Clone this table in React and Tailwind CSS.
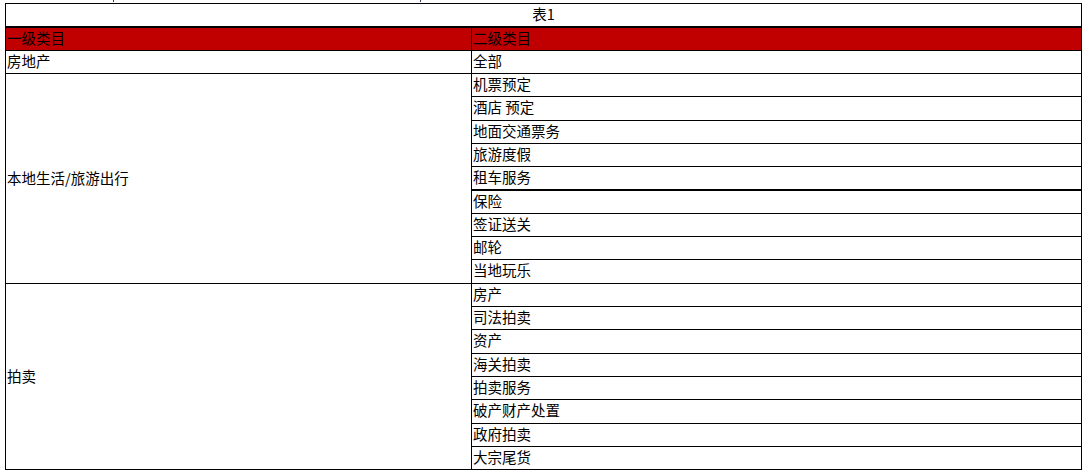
const font = { fontFamily: '"Microsoft YaHei", "Noto Sans CJK SC", "Noto Sans", sans-serif' };

// 二级类目 rows: [label, height, thick bottom border]
const TRAVEL = [
  ["机票预定", 23],
  ["酒店 预定", 24],
  ["地面交通票务", 23],
  ["旅游度假", 23],
  ["租车服务", 24, true],
  ["保险", 23],
  ["签证送关", 23],
  ["邮轮", 23],
  ["当地玩乐", 24],
];

const AUCTION = [
  ["房产", 23],
  ["司法拍卖", 23],
  ["资产", 24],
  ["海关拍卖", 23],
  ["拍卖服务", 23],
  ["破产财产处置", 24],
  ["政府拍卖", 23],
];

const heights = { 22: "h-[22px]", 23: "h-[23px]", 24: "h-[24px]" };

const Cell = ({ label, h, thick, last }) => (
  <div
    className={[
      "flex items-center pl-[1px] pb-[2px] leading-none",
      heights[h],
      last ? "" : thick ? "border-b-2 border-black" : "border-b border-black",
    ].join(" ")}
  >
    {label}
  </div>
);

const App = () => {
  return (
    <div className="w-[1086px] h-[472px] bg-white text-black text-[14.5px]" style={font}>
      {/* cut-off marks from content above */}
      <div className="h-[3px] flex">
        <div className="ml-[113px] w-px h-[2px] bg-[#3a3a5a]" />
        <div className="ml-[306px] w-px h-[2px] bg-[#3a3a5a]" />
      </div>

      <div className="ml-[5px] w-[1077px] border border-black">
        {/* title */}
        <div className="h-[24px] border-b-2 border-black flex items-center justify-center pb-[2px] leading-none">
          表1
        </div>

        {/* header */}
        <div className="h-[23px] flex border-b border-black bg-[#c00000]">
          <div className="w-[466px] border-r border-black flex items-center pl-[1px] pb-[2px] leading-none">
            一级类目
          </div>
          <div className="flex-1 flex items-center pl-[1px] pb-[2px] leading-none">二级类目</div>
        </div>

        {/* body */}
        <div className="flex">
          <div className="w-[466px] border-r border-black flex flex-col">
            <div className="h-[23px] border-b border-black flex items-center pl-[1px] pb-[2px] leading-none">
              房地产
            </div>
            <div className="h-[210px] border-b border-black flex items-center pl-[1px] leading-none">
              本地生活/旅游出行
            </div>
            <div className="h-[185px] flex items-center pl-[1px] leading-none">拍卖</div>
          </div>
          <div className="flex-1 flex flex-col">
            <Cell label="全部" h={23} />
            {TRAVEL.map(([label, h, thick]) => (
              <Cell key={label} label={label} h={h} thick={thick} />
            ))}
            {AUCTION.map(([label, h]) => (
              <Cell key={label} label={label} h={h} />
            ))}
            <Cell label="大宗尾货" h={22} last />
          </div>
        </div>
      </div>
    </div>
  );
};

export default App;
